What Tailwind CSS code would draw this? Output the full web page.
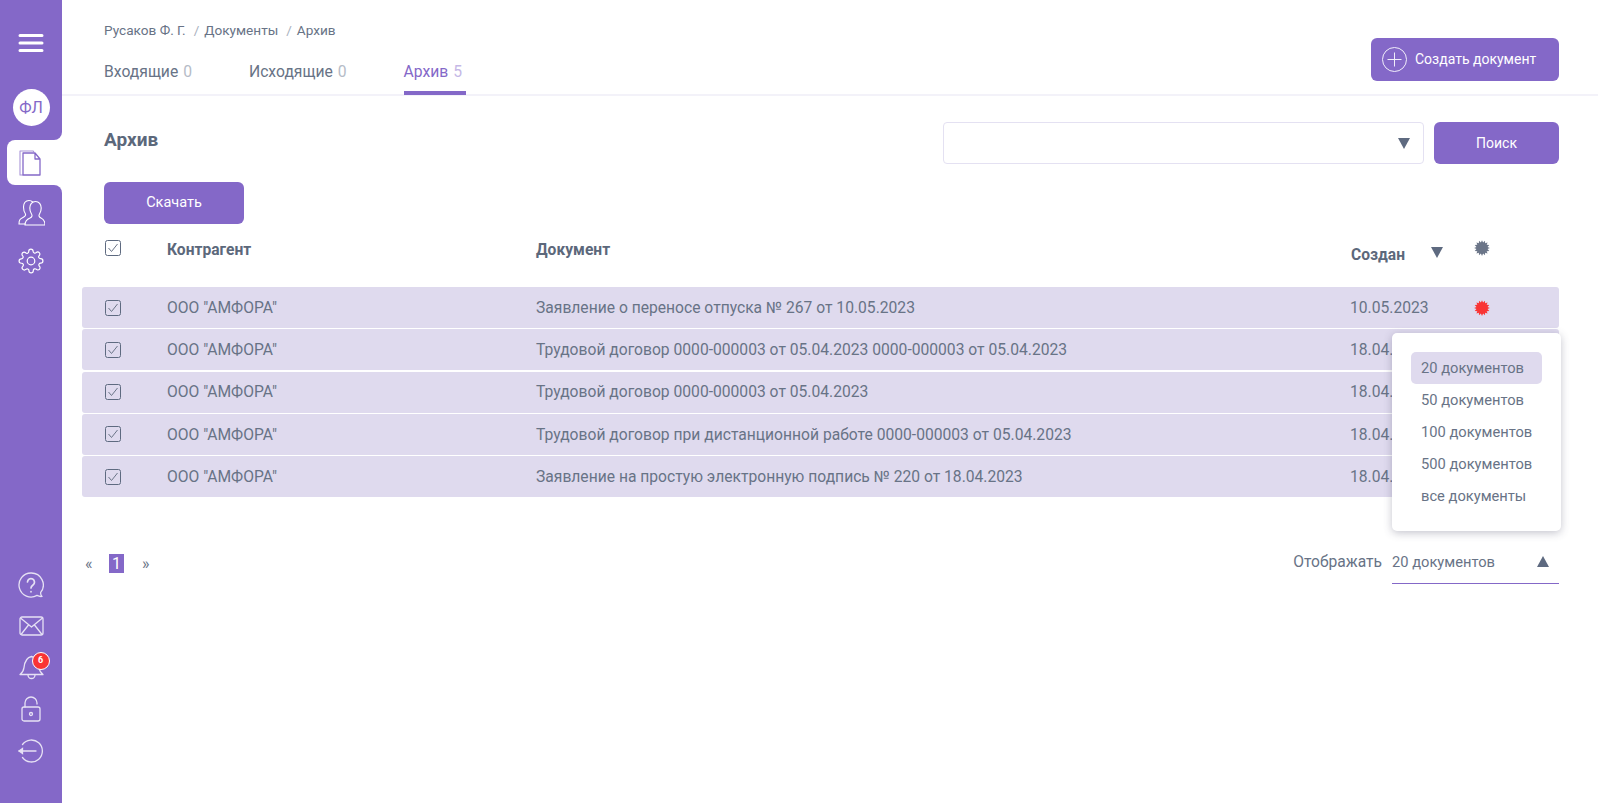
<!DOCTYPE html>
<html lang="ru">
<head>
<meta charset="utf-8">
<title>Архив</title>
<script src="https://cdn.jsdelivr.net/npm/@tailwindcss/browser@4"></script>
</head>
<body class="bg-white font-['Roboto','Liberation_Sans',sans-serif] text-[#687386]">
<div class="flex h-[803px] w-[1598px] overflow-hidden">
  <aside class="flex w-[62px] shrink-0 flex-col bg-white text-white">
    <div class="h-[140px] rounded-br-lg bg-[#8468c8] pt-[33px]">
      <div class="flex justify-center">
        <svg class="h-[20px] w-[26px]" viewBox="0 0 26 20" fill="none" stroke="currentColor" stroke-width="3" stroke-linecap="round"><path d="M2 2.500h22M2 10h22M2 17.500h22"/></svg>
      </div>
      <div class="mx-auto mt-[36px] flex h-[37px] w-[37px] items-center justify-center rounded-full bg-white text-[16px] text-[#8468c8]">ФЛ</div>
    </div>
    <div class="bg-[#8468c8] pl-[7px]">
      <div class="flex h-[45px] items-center rounded-l-lg bg-white pl-[12px] text-[#8468c8]">
        <svg class="h-[26px] w-[22px]" viewBox="0 0 22 26" fill="none" stroke="currentColor" stroke-width="1.100" stroke-linejoin="round"><path class="opacity-70" d="M4 25H1V1h13l1 1"/><path stroke-width="1.3" d="M4 3h12l5 6v16H4zM16 3v6h5"/></svg>
      </div>
    </div>
    <div class="flex flex-1 flex-col items-center rounded-tr-lg bg-[#8468c8] pb-[32px] pt-[14px]">
      <svg class="h-[27px] w-[27px]" viewBox="0 0 27 27" fill="none" stroke="currentColor" stroke-width="1.1" stroke-linecap="round"><path d="M7 25H1c0-4 1-5 4-6.500 2-1 3-2 2.500-3.500C6 13 5.500 11 5.500 8 5.500 4 7.500 1.500 11 1.500c1.500 0 2.800.6 3.700 1.500"/><path d="M7 26c0-4 1.500-5.500 5-7 2-1 2.500-2.500 1.500-4-1.200-1.800-1.700-3.500-1.700-6 0-3.500 2.200-6.500 5.700-6.500s5.700 3 5.700 6.500c0 2.500-.5 4.200-1.700 6-1 1.500-.5 3 1.500 4 3 1.500 4 3 4 7z"/></svg>
      <svg class="mt-[22px] h-[26px] w-[26px]" viewBox="0 0 24 24" fill="none" stroke="currentColor" stroke-width="1.1" stroke-linejoin="round"><circle cx="12" cy="12" r="3.500"/><path d="M19.400 15a1.650 1.650 0 0 0 .33 1.820l.06.06a2 2 0 1 1-2.830 2.830l-.06-.06a1.650 1.650 0 0 0-2.800 1.170V21a2 2 0 1 1-4 0v-.09A1.650 1.650 0 0 0 7.300 19.700l-.06.06a2 2 0 1 1-2.830-2.830l.06-.06a1.650 1.650 0 0 0-1.170-2.800H3a2 2 0 1 1 0-4h.09A1.650 1.650 0 0 0 4.300 7.300l-.06-.06a2 2 0 1 1 2.830-2.830l.06.06a1.650 1.650 0 0 0 2.800-1.170V3a2 2 0 1 1 4 0v.09a1.650 1.650 0 0 0 2.800 1.170l.06-.06a2 2 0 1 1 2.830 2.830l-.06.06a1.650 1.650 0 0 0 1.170 2.800H21a2 2 0 1 1 0 4h-.09a1.650 1.650 0 0 0-1.510 1z"/></svg>
      <div class="mt-auto flex flex-col items-center">
        <div class="flex h-[41px] items-center">
          <svg class="h-[26px] w-[26px]" viewBox="0 0 26 26" fill="none" stroke="#e6e1f4" stroke-width="1.300" stroke-linecap="round" stroke-linejoin="round"><path d="M13 1a12 12 0 1 0 6 22.400c1.500.8 3.200 1.300 5 1-1-1-1.600-2.500-1.300-4A12 12 0 0 0 13 1z"/><path stroke-width="1.700" d="M9.500 10a3.500 3.500 0 1 1 5.500 3c-1.300.9-2 1.500-2 3M13 19.500v.3"/></svg>
        </div>
        <div class="flex h-[41px] items-center">
          <svg class="h-[20px] w-[25px]" viewBox="0 0 25 20" fill="none" stroke="#e6e1f4" stroke-width="1.300" stroke-linejoin="round"><rect x="1" y="1" width="23" height="18" rx="2"/><path d="M1.500 2l11 9 11-9M2 18.500l7.500-9.500M23 18.500L15.500 9"/></svg>
        </div>
        <div class="relative flex h-[41px] items-center">
          <svg class="h-[26px] w-[25px]" viewBox="0 0 25 26" fill="none" stroke="#e6e1f4" stroke-width="1.300" stroke-linejoin="round"><path d="M1 20.500c2-1.500 3.500-3 4-7 .6-5 2-10 7.500-11 5.500 1 7 6 7.500 11 .5 4 2 5.500 4 7z"/><path d="M9 21a3.500 3.500 0 0 0 7 0"/></svg>
          <span class="absolute left-[13px] top-[6px] flex h-[18px] w-[18px] items-center justify-center rounded-full border-[1.500px] border-white bg-[#f93434] text-[9px] font-bold text-white">6</span>
        </div>
        <div class="flex h-[43px] items-center">
          <svg class="h-[26px] w-[20px]" viewBox="0 0 20 26" fill="none" stroke="#e6e1f4" stroke-width="1.300" stroke-linecap="round"><rect x="1" y="11" width="18" height="14" rx="2"/><path d="M4 11V7a6 6 0 0 1 12 0v1"/><circle cx="10" cy="18" r="1.500"/></svg>
        </div>
        <div class="flex h-[41px] items-center">
          <svg class="h-[24px] w-[26px]" viewBox="0 0 26 24" fill="none" stroke="#e6e1f4" stroke-width="1.300" stroke-linecap="round"><path d="M4.500 5.500a11 11 0 1 1 0 13"/><path d="M1 12h17"/><path d="M1 12l3.500-2.500v5z" fill="#e6e1f4"/></svg>
        </div>
      </div>
    </div>
  </aside>

  <main class="min-w-0 flex-1">
    <header class="flex h-[96px] items-start justify-between border-b-2 border-[#f3f2f9] pl-[42px] pr-[39px]">
      <div>
        <nav class="flex pt-[22px] text-[13.600px] leading-[16px] text-[#687386]">
          <span>Русаков Ф. Г.</span><span class="ml-[8px] text-[#a9b1be]">/</span><span class="ml-[5px]">Документы</span><span class="ml-[8px] text-[#a9b1be]">/</span><span class="ml-[5px]">Архив</span>
        </nav>
        <div class="mt-[25px] flex gap-[57px] text-[15.700px] leading-[18px]">
          <span>Входящие <span class="ml-[1px] text-[#b6bcc7]">0</span></span>
          <span>Исходящие <span class="ml-[1px] text-[#b6bcc7]">0</span></span>
          <span class="h-[32px] border-b-4 border-[#8468c8] text-[#8468c8]">Архив <span class="ml-[1px] mr-[4px] text-[#c5b8e6]">5</span></span>
        </div>
      </div>
      <button class="mt-[38px] flex h-[43px] w-[188px] items-center rounded-md bg-[#8468c8] pl-[11px] text-[14px] text-white">
        <svg class="mr-[8px] h-[25px] w-[25px]" viewBox="0 0 25 25" fill="none" stroke="#f1eefa" stroke-width="1"><circle cx="12.500" cy="12.500" r="12"/><path d="M12.500 5.500v14M5.500 12.500h14"/></svg>
        Создать документ
      </button>
    </header>

    <div class="pl-[20px] pr-[39px]">
      <div class="flex items-start pl-[22px] pt-[26px]">
        <h1 class="mt-[6px] text-[19px] font-bold leading-[24px] text-[#5c687b]">Архив</h1>
        <div class="ml-auto flex h-[42px] w-[481px] items-center justify-end rounded-[4px] border border-[#e4e1f2] pr-[12px]">
          <svg class="h-[11px] w-[14px]" viewBox="0 0 14 11" fill="#5e6a80"><path d="M1 0h12L7 11z"/></svg>
        </div>
        <button class="ml-[10px] h-[42px] w-[125px] rounded-md bg-[#8468c8] text-[14px] text-white">Поиск</button>
      </div>
      <button class="ml-[22px] mt-[18px] block h-[42px] w-[140px] rounded-md bg-[#8468c8] text-[14.500px] text-white">Скачать</button>

      <div class="grid h-[63px] grid-cols-[62px_369px_815px_79px_43px_1fr] pl-[23px] text-[15.600px] font-bold text-[#5c687b]">
        <div class="pt-[16px]"><svg class="h-[16px] w-[16px]" viewBox="0 0 16 16" fill="none" stroke="#5e6a80"><rect x=".5" y=".5" width="15" height="15" rx="2"/><path stroke="#6b7588" d="M3.500 8l3 3.500 6-7.500"/></svg></div>
        <div class="pt-[17px] leading-[18px]">Контрагент</div>
        <div class="pt-[17px] leading-[18px]">Документ</div>
        <div class="pt-[22px] leading-[18px]">Создан</div>
        <div class="pt-[23px]"><svg class="h-[11px] w-[14px]" viewBox="0 0 14 11" fill="#5e6a80"><path d="M1 0h12L7 11z"/></svg></div>
        <div class="pt-[15px]"><svg class="h-[18px] w-[18px]" viewBox="0 0 16 16" fill="#6b7588"><path d="M15 8L12.900 7.020 14.470 5.320 12.160 5.220 12.950 3.050 10.780 3.840 10.680 1.530 8.980 3.100 8 1 7.020 3.100 5.320 1.530 5.220 3.840 3.050 3.050 3.840 5.220 1.530 5.320 3.100 7.020 1 8 3.100 8.980 1.530 10.680 3.840 10.780 3.050 12.950 5.220 12.160 5.320 14.470 7.020 12.900 8 15 8.980 12.900 10.680 14.470 10.780 12.160 12.950 12.950 12.160 10.780 14.470 10.680 12.900 8.980z"/></svg></div>
      </div>

      <div class="relative flex flex-col gap-[1.250px]">
        <div class="grid h-[41px] grid-cols-[62px_369px_814px_123px_1fr] items-center rounded-[3px] bg-[#dfdaee] pl-[23px] text-[15.650px]">
          <svg class="h-[16px] w-[16px]" viewBox="0 0 16 16" fill="none" stroke="#5e6a80"><rect x=".5" y=".5" width="15" height="15" rx="2"/><path stroke="#6b7588" d="M3.500 8l3 3.500 6-7.500"/></svg>
          <div>ООО "АМФОРА"</div>
          <div>Заявление о переносе отпуска № 267 от 10.05.2023</div>
          <div>10.05.2023</div>
          <svg class="h-[18px] w-[18px]" viewBox="0 0 16 16" fill="#f93434"><path d="M15 8L12.900 7.020 14.470 5.320 12.160 5.220 12.950 3.050 10.780 3.840 10.680 1.530 8.980 3.100 8 1 7.020 3.100 5.320 1.530 5.220 3.840 3.050 3.050 3.840 5.220 1.530 5.320 3.100 7.020 1 8 3.100 8.980 1.530 10.680 3.840 10.780 3.050 12.950 5.220 12.160 5.320 14.470 7.020 12.900 8 15 8.980 12.900 10.680 14.470 10.780 12.160 12.950 12.950 12.160 10.780 14.470 10.680 12.900 8.980z"/></svg>
        </div>
        <div class="grid h-[41px] grid-cols-[62px_369px_814px_123px_1fr] items-center rounded-[3px] bg-[#dfdaee] pl-[23px] text-[15.650px]">
          <svg class="h-[16px] w-[16px]" viewBox="0 0 16 16" fill="none" stroke="#5e6a80"><rect x=".5" y=".5" width="15" height="15" rx="2"/><path stroke="#6b7588" d="M3.500 8l3 3.500 6-7.500"/></svg>
          <div>ООО "АМФОРА"</div>
          <div>Трудовой договор 0000-000003 от 05.04.2023 0000-000003 от 05.04.2023</div>
          <div>18.04.2023</div>
        </div>
        <div class="grid h-[41px] grid-cols-[62px_369px_814px_123px_1fr] items-center rounded-[3px] bg-[#dfdaee] pl-[23px] text-[15.650px]">
          <svg class="h-[16px] w-[16px]" viewBox="0 0 16 16" fill="none" stroke="#5e6a80"><rect x=".5" y=".5" width="15" height="15" rx="2"/><path stroke="#6b7588" d="M3.500 8l3 3.500 6-7.500"/></svg>
          <div>ООО "АМФОРА"</div>
          <div>Трудовой договор 0000-000003 от 05.04.2023</div>
          <div>18.04.2023</div>
        </div>
        <div class="grid h-[41px] grid-cols-[62px_369px_814px_123px_1fr] items-center rounded-[3px] bg-[#dfdaee] pl-[23px] text-[15.650px]">
          <svg class="h-[16px] w-[16px]" viewBox="0 0 16 16" fill="none" stroke="#5e6a80"><rect x=".5" y=".5" width="15" height="15" rx="2"/><path stroke="#6b7588" d="M3.500 8l3 3.500 6-7.500"/></svg>
          <div>ООО "АМФОРА"</div>
          <div>Трудовой договор при дистанционной работе 0000-000003 от 05.04.2023</div>
          <div>18.04.2023</div>
        </div>
        <div class="grid h-[41px] grid-cols-[62px_369px_814px_123px_1fr] items-center rounded-[3px] bg-[#dfdaee] pl-[23px] text-[15.650px]">
          <svg class="h-[16px] w-[16px]" viewBox="0 0 16 16" fill="none" stroke="#5e6a80"><rect x=".5" y=".5" width="15" height="15" rx="2"/><path stroke="#6b7588" d="M3.500 8l3 3.500 6-7.500"/></svg>
          <div>ООО "АМФОРА"</div>
          <div>Заявление на простую электронную подпись № 220 от 18.04.2023</div>
          <div>18.04.2023</div>
        </div>

        <div class="absolute left-[1310px] top-[46px] h-[198px] w-[169px] rounded-[5px] bg-white pl-[19px] pt-[19px] text-[14.700px] shadow-[0_2px_8px_rgba(60,60,90,0.3)]">
          <div class="flex h-[32px] w-[131px] items-center rounded-[5px] bg-[#dfdaee] pl-[10px] pt-[1px]">20 документов</div>
          <div class="flex h-[32px] items-center pl-[10px] pt-[1px]">50 документов</div>
          <div class="flex h-[32px] items-center pl-[10px] pt-[1px]">100 документов</div>
          <div class="flex h-[32px] items-center pl-[10px] pt-[1px]">500 документов</div>
          <div class="flex h-[32px] items-center pl-[10px] pt-[1px]">все документы</div>
        </div>
      </div>

      <div class="mt-[44px] flex items-start justify-between">
        <div class="flex items-center pl-[3px] pt-[13px] text-[16px] leading-[19px]">
          <span class="w-[24px]">«</span>
          <span class="flex h-[19px] w-[15px] items-center justify-center bg-[#8468c8] text-[16px] text-white">1</span>
          <span class="ml-[18px]">»</span>
        </div>
        <div class="flex text-[15.600px]">
          <span class="pt-[11px] leading-[20px]">Отображать</span>
          <div class="ml-[10px] flex h-[43px] w-[167px] items-start justify-between border-b border-[#8468c8] pr-[9px] pt-[11px] leading-[20px]">
            <span class="text-[14.700px]">20 документов</span>
            <svg class="mt-[4px] h-[11px] w-[14px]" viewBox="0 0 14 11" fill="#5e6a80"><path d="M1 11h12L7 0z"/></svg>
          </div>
        </div>
      </div>
    </div>
  </main>
</div>
</body>
</html>
